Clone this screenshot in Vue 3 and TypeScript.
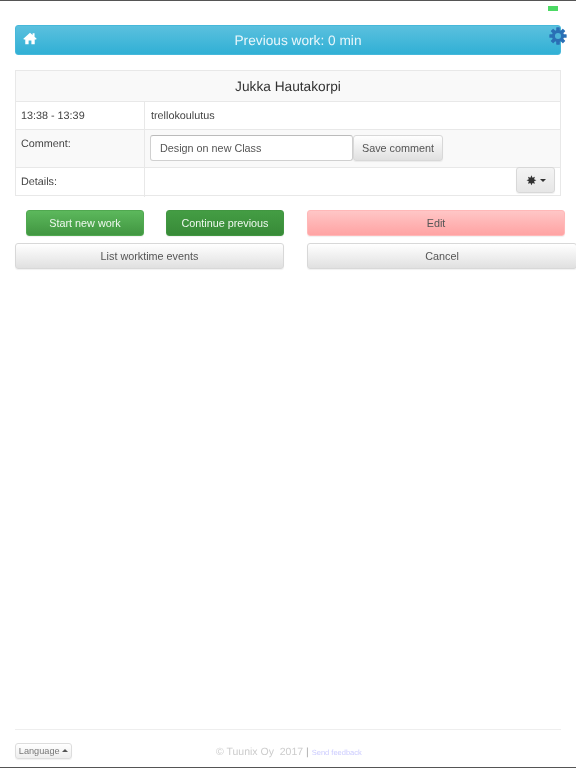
<script setup lang="ts">
const teeth = [0, 45, 90, 135]
</script>

<template>
  <div class="page">
    <div class="status"><span class="battery"></span></div>

    <header class="topbar">
      <svg class="home" viewBox="0 0 16 14" width="14" height="13">
        <path d="M8 0.3 L11 3 L11 1 L13.2 1 L13.2 5 L15.6 7.2 L15 8 L13.4 8 L13.4 13.6 L9.6 13.6 L9.6 9.3 L6.4 9.3 L6.4 13.6 L2.6 13.6 L2.6 8 L1 8 L0.4 7.2 Z" fill="#fff" />
      </svg>
      <span class="title">Previous work: 0 min</span>
      <svg class="gear" viewBox="0 0 20 20" width="18" height="18">
        <rect v-for="a in teeth" :key="a" x="8" y="0.4" width="4" height="19.2" rx="0.6" fill="#2a6fb5" :transform="`rotate(${a} 10 10)`" />
        <circle cx="10" cy="10" r="6.8" fill="#2a6fb5" />
        <circle cx="10" cy="10" r="3.4" fill="#4db4d8" />
      </svg>
    </header>

    <section class="card">
      <div class="name">Jukka Hautakorpi</div>
      <div class="row time">
        <div class="label">13:38 - 13:39</div>
        <div class="value">trellokoulutus</div>
      </div>
      <div class="row comment">
        <div class="label">Comment:</div>
        <div class="value inline">
          <input class="field" type="text" value="Design on new Class" />
          <button class="btn save">Save comment</button>
        </div>
      </div>
      <div class="row details">
        <div class="label">Details:</div>
        <div class="value end">
          <button class="btn cog"><span class="star">✸</span><span class="caret"></span></button>
        </div>
      </div>
    </section>

    <section class="actions">
      <div class="start-row">
        <button class="btn green light">Start new work</button>
        <button class="btn green dark">Continue previous</button>
      </div>
      <button class="btn pink">Edit</button>
      <button class="btn wide">List worktime events</button>
      <button class="btn wide cancel">Cancel</button>
    </section>

    <footer class="footer">
      <button class="btn lang">Language <span class="caret up"></span></button>
      <div class="copy">© Tuunix Oy&nbsp; 2017 <span class="sep">|</span> <a class="feedback">Send feedback</a></div>
    </footer>
  </div>
</template>

<style>
html,
body {
  margin: 0;
  overflow: hidden;
  background: #fff;
}
</style>

<style scoped>
.page {
  box-sizing: border-box;
  width: 576px;
  height: 768px;
  display: flex;
  flex-direction: column;
  padding: 0 15px;
  border-top: 1px solid #555;
  border-bottom: 1px solid #555;
  font-family: "Liberation Sans", Arial, sans-serif;
  font-size: 10.8px;
  color: #444;
  overflow: hidden;
  text-rendering: geometricPrecision;
  filter: blur(0.3px);
}

.status {
  height: 24px;
  display: flex;
  justify-content: flex-end;
  align-items: flex-start;
  padding-top: 5px;
  box-sizing: border-box;
}

.battery {
  width: 10px;
  height: 5px;
  margin-right: 3px;
  background: #4cd964;
}

.topbar {
  position: relative;
  height: 30px;
  width: 546px;
  box-sizing: border-box;
  display: flex;
  align-items: center;
  justify-content: center;
  border: 1px solid #46b8da;
  border-radius: 3px;
  background: linear-gradient(#5bc0de, #31b0d5);
  color: #e8f6fb;
  font-size: 13.7px;
}

.title {
  padding-left: 20px;
}

.home {
  position: absolute;
  left: 6.5px;
  top: 6px;
}

.gear {
  position: absolute;
  right: -7px;
  top: 1px;
}

.card {
  margin-top: 15px;
  width: 546px;
  box-sizing: border-box;
  border: 1px solid #e8e8e8;
}

.name {
  height: 31px;
  box-sizing: border-box;
  display: flex;
  align-items: center;
  justify-content: center;
  background: #f9f9f9;
  font-size: 13.7px;
  color: #333;
  border-bottom: 1px solid #e8e8e8;
}

.row {
  display: grid;
  grid-template-columns: 129px 1fr;
  box-sizing: border-box;
  border-bottom: 1px solid #e8e8e8;
}

.row:last-child {
  border-bottom: none;
}

.time {
  height: 28px;
}

.comment {
  height: 38px;
  background: #f9f9f9;
}

.details {
  height: 27px;
}

.label {
  padding: 8px 5px;
  border-right: 1px solid #e8e8e8;
  line-height: 13px;
}

.value {
  padding: 8px 6px;
  line-height: 13px;
}

.inline {
  display: flex;
  padding: 5px;
}

.end {
  display: flex;
  justify-content: flex-end;
  padding: 0 5px 0 0;
}

.field {
  box-sizing: border-box;
  width: 203px;
  height: 26px;
  padding: 0 9px;
  border: 1px solid #d0d0d0;
  border-top-color: #bbb;
  border-radius: 3px;
  background: #fff;
  font: 10.8px "Liberation Sans", Arial, sans-serif;
  color: #555;
}

.btn {
  box-sizing: border-box;
  height: 26px;
  padding: 0;
  border: 1px solid #d8d8d8;
  border-radius: 3px;
  background: linear-gradient(#fff, #e0e0e0);
  box-shadow: 0 1px 1px rgba(0, 0, 0, 0.06);
  font: 10.8px "Liberation Sans", Arial, sans-serif;
  color: #555;
}

.save {
  width: 90px;
}

.cog {
  width: 39px;
  height: 26px;
  margin-top: -1px;
  display: flex;
  align-items: center;
  justify-content: center;
  gap: 3px;
  background: linear-gradient(#f4f4f4, #e6e6e6);
}

.star {
  font-size: 13px;
  line-height: 1;
  color: #333;
}

.caret {
  display: inline-block;
  width: 0;
  height: 0;
  border-left: 3px solid transparent;
  border-right: 3px solid transparent;
  border-top: 3px solid #333;
}

.caret.up {
  border-top: none;
  border-bottom: 3px solid #555;
  vertical-align: 2px;
}

.actions {
  margin-top: 14px;
  display: grid;
  grid-template-columns: 269px 269px;
  column-gap: 23px;
  row-gap: 7px;
}

.start-row {
  display: flex;
  gap: 22px;
  padding-left: 11px;
}

.start-row .btn {
  width: 118px;
}

.green {
  color: #eef8ee;
}

.light {
  border-color: #50a850;
  background: linear-gradient(#5cb85c, #419641);
}

.dark {
  border-color: #419641;
  background: linear-gradient(#449d44, #388a38);
}

.pink {
  width: 258px;
  border-color: #ffb8b8;
  background: linear-gradient(#ffc6c6, #ffa3a3);
}

.cancel {
  width: 270px;
}

.footer {
  margin-top: auto;
  width: 546px;
  height: 38px;
  box-sizing: border-box;
  border-top: 1px solid #eee;
  position: relative;
}

.lang {
  position: absolute;
  left: 0;
  top: 13px;
  width: 57px;
  height: 16px;
  font-size: 9.2px;
  color: #777;
  background: linear-gradient(#fff, #eee);
  border-color: #ddd;
}

.copy {
  position: absolute;
  left: 201px;
  top: 16px;
  font-size: 10.5px;
  line-height: 13px;
  color: #ccc;
  white-space: nowrap;
}

.sep {
  color: #aaa;
}

.feedback {
  font-size: 7.5px;
  color: #ccccff;
}
</style>
